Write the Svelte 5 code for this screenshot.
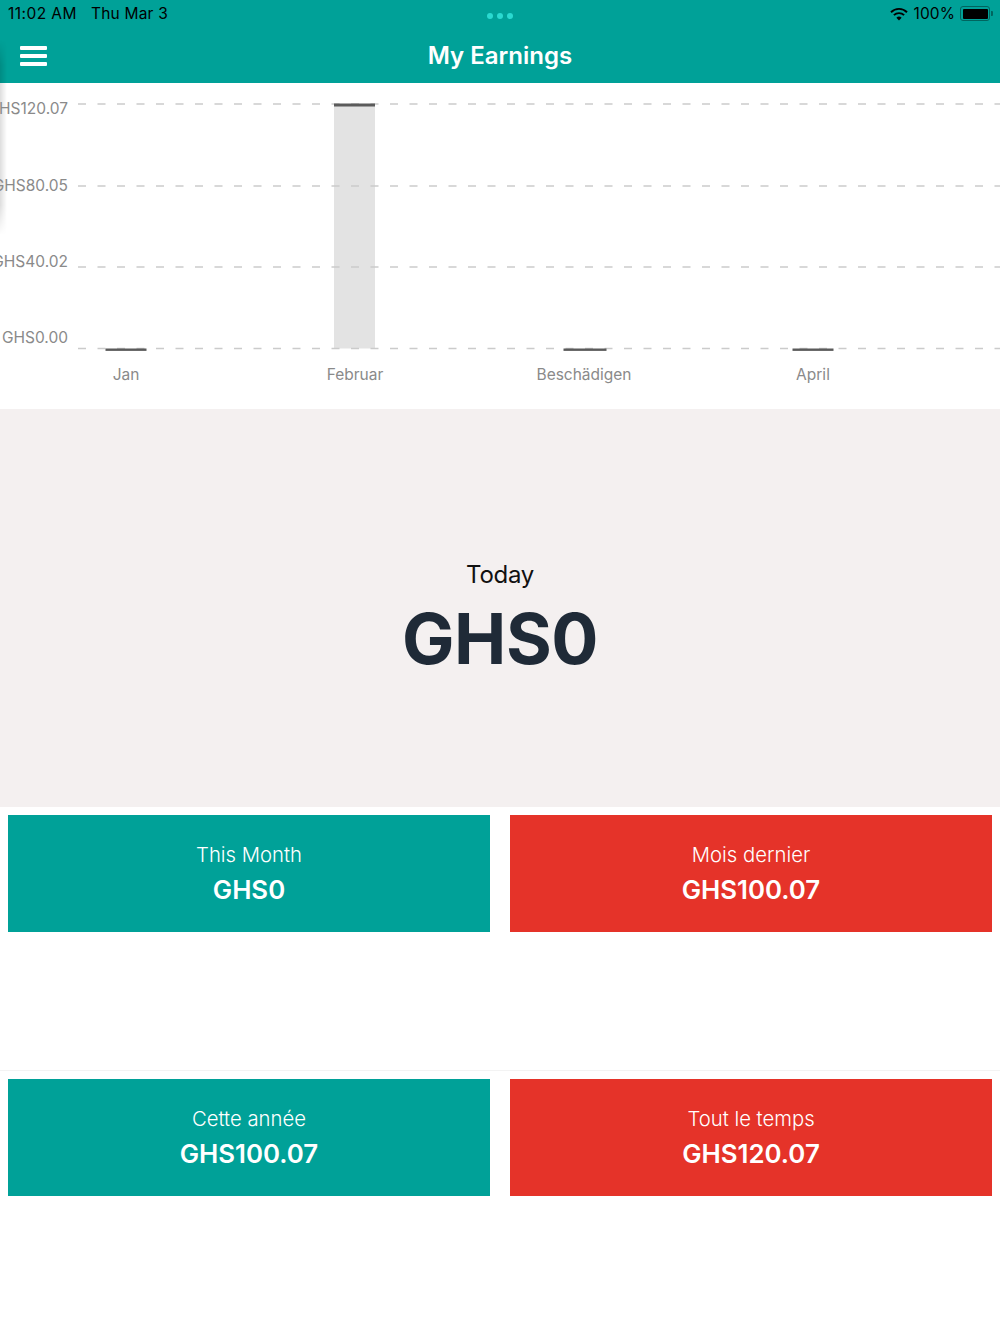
<script>
  const yLabels = [
    { text: 'GHS120.07', y: 114 - 83 },
    { text: 'GHS80.05', y: 191 - 83 },
    { text: 'GHS40.02', y: 267 - 83 },
    { text: 'GHS0.00', y: 343 - 83 }
  ];
  const gridY = [21, 103, 184, 265.5];
  const xLabels = [
    { text: 'Jan', x: 126 },
    { text: 'Februar', x: 355 },
    { text: 'Beschädigen', x: 584 },
    { text: 'April', x: 813 }
  ];
  const flat = [126, 584, 813];
  const rows = [
    [
      { label: 'This Month', value: 'GHS0', tone: 'teal' },
      { label: 'Mois dernier', value: 'GHS100.07', tone: 'red' }
    ],
    [
      { label: 'Cette année', value: 'GHS100.07', tone: 'teal' },
      { label: 'Tout le temps', value: 'GHS120.07', tone: 'red' }
    ]
  ];
</script>

<div class="page">
  <header class="header">
    <div class="status">
      <div class="status-left"><span class="time">11:02 AM</span><span>Thu Mar 3</span></div>
      <div class="dots"><i></i><i></i><i></i></div>
      <div class="status-right">
        <svg width="18" height="14" viewBox="0 0 18 14" aria-hidden="true">
          <path d="M9 13.5 6.4 10.7a3.7 3.7 0 0 1 5.2 0Z" fill="#000" />
          <path d="M3.9 8.2a7.2 7.2 0 0 1 10.2 0" fill="none" stroke="#000" stroke-width="1.9" />
          <path d="M1 5.2a11.4 11.4 0 0 1 16 0" fill="none" stroke="#000" stroke-width="1.9" />
        </svg>
        <span class="pct">100%</span>
        <div class="battery"><div class="battery-fill"></div></div>
        <div class="battery-tip"></div>
      </div>
    </div>
    <div class="nav">
      <div class="burger"><i></i><i></i><i></i></div>
      <h1>My Earnings</h1>
    </div>
  </header>

  <div class="edge-shadow"></div>

  <section class="chart">
    <svg class="chart-svg" width="1000" height="326" viewBox="0 0 1000 326">
      <rect x="334" y="21" width="41" height="244.5" fill="#e3e3e3" />
      {#each gridY as y}
        <line x1="78" x2="1000" y1={y} y2={y} stroke="#cbcbcb" stroke-width="1.5" stroke-dasharray="8 11.5" />
      {/each}
      <rect x="334" y="20.5" width="41" height="3" fill="#5b5b5b" />
      {#each flat as x}
        <rect x={x - 20.5} y="265.5" width={x === 584 ? 43 : 41} height="2.4" fill="#5b5b5b" />
      {/each}
      {#each yLabels as l}
        <text class="axis" x="68" y={l.y} text-anchor="end">{l.text}</text>
      {/each}
      {#each xLabels as l}
        <text class="axis" x={l.x} y="297" text-anchor="middle">{l.text}</text>
      {/each}
    </svg>
  </section>

  <section class="today">
    <div class="today-label">Today</div>
    <div class="today-value">GHS0</div>
  </section>

  {#each rows as row}
    <div class="row">
      {#each row as card}
        <div class="card {card.tone}">
          <div class="card-label">{card.label}</div>
          <div class="card-value">{card.value}</div>
        </div>
      {/each}
    </div>
  {/each}
</div>

<style>
  :global(body) {
    margin: 0;
    background: #fff;
  }
  .page {
    position: relative;
    width: 1000px;
    height: 1334px;
    overflow: hidden;
    background: #fff;
    font-family: Inter, "Liberation Sans", sans-serif;
  }
  .header {
    height: 83px;
    background: #00a198;
    display: flex;
    flex-direction: column;
    box-sizing: border-box;
  }
  .status {
    height: 27px;
    display: grid;
    grid-template-columns: 1fr auto 1fr;
    align-items: center;
    padding: 0 8px 1px;
    font-size: 15.5px;
    letter-spacing: 0.2px;
    color: #000;
  }
  .status-left {
    display: flex;
    gap: 14px;
  }
  .time {
    letter-spacing: 0.45px;
  }
  .dots {
    display: flex;
    gap: 4px;
    padding-top: 5px;
  }
  .dots i {
    width: 6px;
    height: 6px;
    border-radius: 50%;
    background: #2ad9d0;
  }
  .status-right {
    display: flex;
    align-items: center;
    justify-content: flex-end;
    gap: 0;
  }
  .pct {
    margin: 0 5px 0 6px;
    letter-spacing: 0.1px;
  }
  .battery {
    width: 30px;
    height: 15px;
    box-sizing: border-box;
    border: 1px solid #00655f;
    border-radius: 3px;
    padding: 1.5px;
  }
  .battery-fill {
    height: 100%;
    background: #000;
    border-radius: 1px;
  }
  .battery-tip {
    width: 1.5px;
    height: 5px;
    margin-left: 1px;
    margin-right: -0.5px;
    background: #00655f;
    border-radius: 0 1px 1px 0;
  }
  .nav {
    flex: 1;
    position: relative;
    display: flex;
    align-items: center;
    justify-content: center;
  }
  .nav h1 {
    margin: 0;
    font-size: 24px;
    font-weight: 600;
    color: #fff;
  }
  .burger {
    position: absolute;
    left: 20px;
    top: 18px;
    width: 27px;
    display: flex;
    flex-direction: column;
    gap: 4.6px;
  }
  .burger i {
    height: 3.6px;
    background: #fff;
    border-radius: 1px;
  }
  .edge-shadow {
    position: absolute;
    left: 0;
    top: 40px;
    width: 7px;
    height: 195px;
    background: linear-gradient(90deg, rgba(0, 0, 0, 0.13), rgba(0, 0, 0, 0));
    -webkit-mask-image: linear-gradient(180deg, rgba(0, 0, 0, 0) 0, #000 25px, #000 165px, rgba(0, 0, 0, 0) 100%);
    mask-image: linear-gradient(180deg, rgba(0, 0, 0, 0) 0, #000 25px, #000 165px, rgba(0, 0, 0, 0) 100%);
  }
  .chart {
    position: relative;
    height: 326px;
  }
  .chart-svg {
    display: block;
  }
  .axis {
    font-family: Inter, "Liberation Sans", sans-serif;
    font-size: 15.5px;
    fill: #8a8a8a;
  }
  .today {
    height: 397.5px;
    box-sizing: border-box;
    padding-top: 24px;
    background: #f4f0f0;
    display: flex;
    flex-direction: column;
    align-items: center;
    justify-content: center;
  }
  .today-label {
    font-size: 24px;
    line-height: 30px;
    color: #111;
    letter-spacing: -0.3px;
  }
  .today-value {
    font-size: 70px;
    line-height: 80px;
    margin-top: 9px;
    font-weight: 700;
    color: #1f2a37;
    letter-spacing: -0.5px;
  }
  .row {
    height: 264px;
    box-sizing: border-box;
    padding: 8.5px 8px 0;
    display: grid;
    grid-template-columns: 482px 482px;
    justify-content: space-between;
    align-items: start;
    border-bottom: 1px solid #f3f3f3;
  }
  .row:last-child {
    border-bottom: 0;
  }
  .card {
    height: 117px;
    color: #fff;
    text-align: center;
    box-sizing: border-box;
    padding-top: 27px;
  }
  .teal {
    background: #00a198;
  }
  .red {
    background: #e53329;
  }
  .card-label {
    font-size: 20.3px;
    line-height: 26px;
    font-weight: 300;
  }
  .card-value {
    margin-top: 7px;
    font-size: 25.8px;
    line-height: 30px;
    font-weight: 600;
  }
</style>
